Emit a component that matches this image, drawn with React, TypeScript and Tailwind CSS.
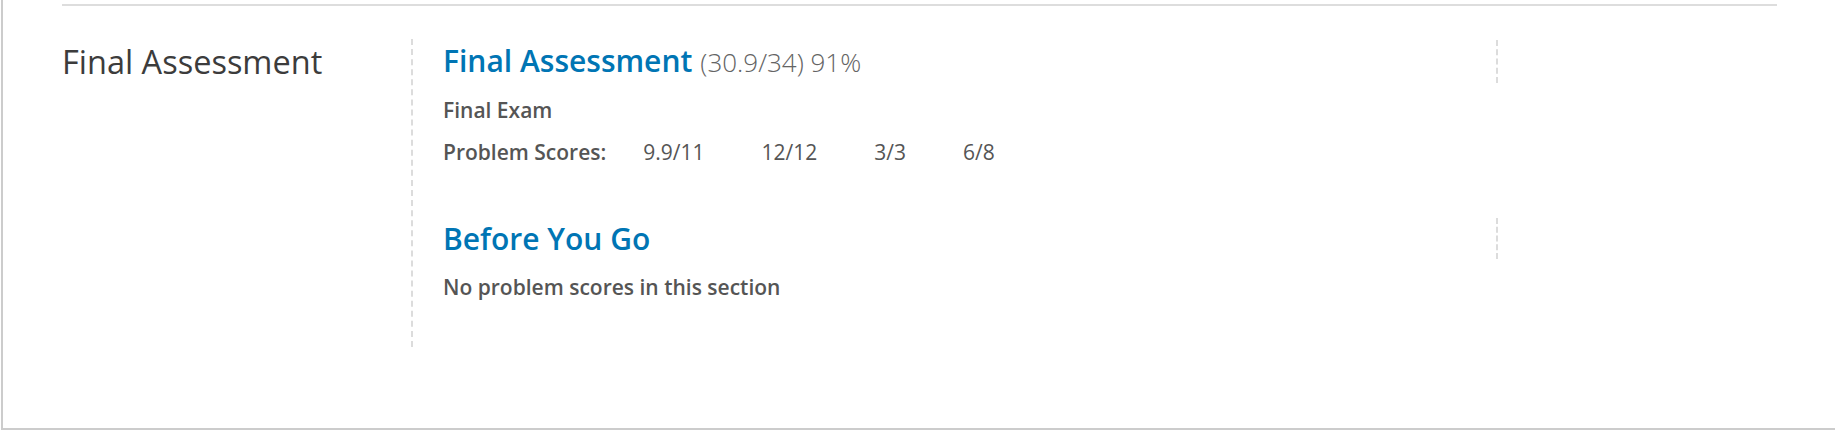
const FONT = { fontFamily: '"Open Sans", "Noto Sans", sans-serif' };

type Section = {
  title: string;
  score?: string;
  subtitle?: string;
  problems?: string[];
};

const sections: Section[] = [
  {
    title: "Final Assessment",
    score: "(30.9/34) 91%",
    subtitle: "Final Exam",
    problems: ["9.9/11", "12/12", "3/3", "6/8"],
  },
  { title: "Before You Go" },
];

function SectionBlock({ section }: { section: Section }) {
  return (
    <div className="pl-[30px]">
      <h3 className="w-[1055px] border-r-2 border-dashed border-[#dcdcdc] text-[30px] font-semibold leading-[41px] text-[#0075b4]">
        {section.title}
        {section.score && (
          <span className="ml-2 text-[26px] font-light text-[#646464]">{section.score}</span>
        )}
      </h3>
      {section.problems ? (
        <>
          <p className="mt-[13px] text-[21px] font-semibold leading-[28px] text-[#555555]">
            {section.subtitle}
          </p>
          <div className="mt-[14px] flex text-[21px] leading-[28px] text-[#555555]">
            <span className="mr-[37px] font-semibold">Problem Scores:</span>
            {section.problems.map((p) => (
              <span key={p} className="mr-[57px]">
                {p}
              </span>
            ))}
          </div>
        </>
      ) : (
        <p className="mt-[14px] text-[21px] font-semibold leading-[28px] text-[#555555]">
          No problem scores in this section
        </p>
      )}
    </div>
  );
}

export default function App() {
  return (
    <div className="h-[439px] w-full overflow-hidden bg-white" style={FONT}>
      <div className="ml-px h-[430px] border-b-2 border-l-2 border-[#cccccc] pl-[59px]">
        <div className="w-[1715px] pt-1">
          <div className="h-[2px] bg-[#dddddd]" />
        </div>
        <div className="mt-[33px] flex">
          <h2 className="w-[349px] shrink-0 pt-px text-[32.5px] font-normal leading-[43px] text-[#3c3c3c]">
            Final Assessment
          </h2>
          <div className="flex flex-col gap-[52px] border-l-2 border-dashed border-[#dcdcdc] pb-[46px] pt-px">
            {sections.map((s) => (
              <SectionBlock key={s.title} section={s} />
            ))}
          </div>
        </div>
      </div>
    </div>
  );
}
